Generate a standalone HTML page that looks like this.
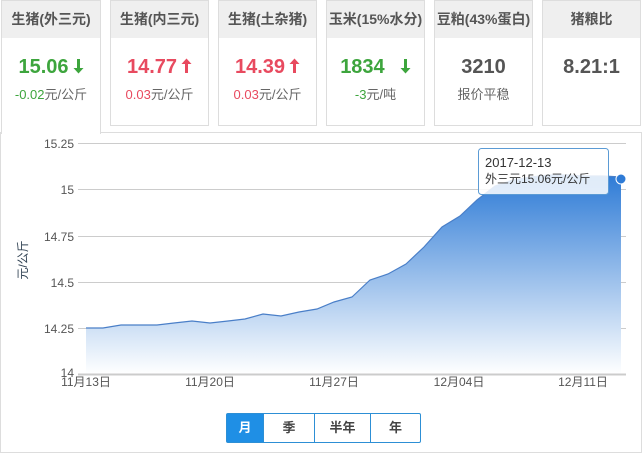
<!DOCTYPE html><html><head><meta charset="utf-8"><style>
body{margin:0;width:643px;height:453px;background:#fff;font-family:"Liberation Sans","Noto Sans CJK SC",sans-serif;position:relative;overflow:hidden}
.panel{position:absolute;left:0;top:132px;width:640px;height:319px;border:1px solid #ddd}
.card{position:absolute;top:0;width:97px;height:124px;border:1px solid #ddd;background:#fff}
.card .h{height:37px;background:#efefef;text-align:center;line-height:37px;font-size:14px;color:#555;font-weight:bold}
.card .v{text-align:center;margin-top:17px;font-size:20px;font-weight:bold;color:#555;height:24px;line-height:24px}
.card .s{text-align:center;margin-top:5px;font-size:13px;color:#666}
.card .v.g,.g{color:#3da53d}.card .v.r,.r{color:#e84a5f}
.card.act{height:133px;border-bottom:none;z-index:2;left:0;top:0}
.v svg{vertical-align:-1px;margin-left:4px}
.btns{position:absolute;left:226px;top:413px;height:28px;display:flex;border:1px solid #2d8fd5;border-radius:2px}
.btns div{height:28px;line-height:28px;text-align:center;font-size:13px;color:#444;font-weight:bold;border-left:1px solid #2d8fd5}
</style></head><body>
<div class="panel"></div>
<div class="card act" style="left:1px;width:98px"><div class="h">生猪(外三元)</div><div class="v g">15.06<svg width="11" height="16" viewBox="0 0 11 16"><path d="M4,1h3v9h3.5L5.5,15.5 0.5,10H4z" fill="#3da53d"/></svg></div><div class="s"><span class="g">-0.02</span>元/公斤</div></div>
<div class="card" style="left:110px"><div class="h">生猪(内三元)</div><div class="v r">14.77<svg width="11" height="16" viewBox="0 0 11 16"><path d="M4,15h3V6h3.5L5.5,0.5 0.5,6H4z" fill="#e84a5f"/></svg></div><div class="s"><span class="r">0.03</span>元/公斤</div></div>
<div class="card" style="left:218px"><div class="h">生猪(土杂猪)</div><div class="v r">14.39<svg width="11" height="16" viewBox="0 0 11 16"><path d="M4,15h3V6h3.5L5.5,0.5 0.5,6H4z" fill="#e84a5f"/></svg></div><div class="s"><span class="r">0.03</span>元/公斤</div></div>
<div class="card" style="left:326px"><div class="h">玉米(15%水分)</div><div class="v g">1834 &nbsp;<svg width="11" height="16" viewBox="0 0 11 16"><path d="M4,1h3v9h3.5L5.5,15.5 0.5,10H4z" fill="#3da53d"/></svg></div><div class="s"><span class="g">-3</span>元/吨</div></div>
<div class="card" style="left:434px"><div class="h">豆粕(43%蛋白)</div><div class="v">3210</div><div class="s">报价平稳</div></div>
<div class="card" style="left:542px"><div class="h">猪粮比</div><div class="v">8.21:1</div></div>
<svg style="position:absolute;left:0;top:0" width="643" height="453">
<defs><linearGradient id="gr" x1="0" y1="0" x2="0" y2="1"><stop offset="0" stop-color="#2e7bd6"/><stop offset="1" stop-color="#fff"/></linearGradient></defs>
<g stroke="#ccc" stroke-width="1">
<line x1="78" y1="143.5" x2="626" y2="143.5"/><line x1="78" y1="189.5" x2="626" y2="189.5"/><line x1="78" y1="236.5" x2="626" y2="236.5"/><line x1="78" y1="282.5" x2="626" y2="282.5"/><line x1="78" y1="328.5" x2="626" y2="328.5"/></g>
<path d="M86,328 L103,328 121,325 139,325 157,325 174,323 192,321 210,323 228,321 245,319 263,314 281,316 299,312 317,309 334,302 352,297 370,280 388,274 406,264 424,247 442,227 460,216 477,200 495,186 513,180 531,177 549,175 567,175 585,176 603,176 621,177 L621,374 L86,374Z" fill="url(#gr)" stroke="none"/>
<polyline points="86,328 103,328 121,325 139,325 157,325 174,323 192,321 210,323 228,321 245,319 263,314 281,316 299,312 317,309 334,302 352,297 370,280 388,274 406,264 424,247 442,227 460,216 477,200 495,186 513,180 531,177 549,175 567,175 585,176 603,176 621,177" fill="none" stroke="#4a7fc8" stroke-width="1.2"/>
<line x1="78" y1="374.5" x2="626" y2="374.5" stroke="#ccc" stroke-width="2"/>
<circle cx="621" cy="179" r="5" fill="#2e7bd6" stroke="#fff" stroke-width="1"/>
<rect x="478.5" y="148.5" width="130" height="46" rx="3" fill="rgba(255,255,255,0.85)" stroke="#5b9bd5"/>
<text x="485" y="167" font-size="13" fill="#333">2017-12-13</text>
<text x="485" y="183" font-size="12" fill="#333">外三元15.06元/公斤</text>
<g font-size="12" fill="#555" text-anchor="end">
<text x="74" y="148">15.25</text><text x="74" y="194">15</text><text x="74" y="241">14.75</text><text x="74" y="287">14.5</text><text x="74" y="333">14.25</text><text x="74" y="377">14</text></g>
<g font-size="12" fill="#555" text-anchor="middle">
<text x="86" y="386">11月13日</text><text x="210" y="386">11月20日</text><text x="334" y="386">11月27日</text><text x="459" y="386">12月04日</text><text x="583" y="386">12月11日</text></g>
<text transform="translate(27,260) rotate(-90)" font-size="12" fill="#345" text-anchor="middle">元/公斤</text>
</svg>
<div class="btns"><div style="width:36px;background:#1f8fe5;color:#fff;border-left:none">月</div><div style="width:50px">季</div><div style="width:55px">半年</div><div style="width:49px">年</div></div>
</body></html>
